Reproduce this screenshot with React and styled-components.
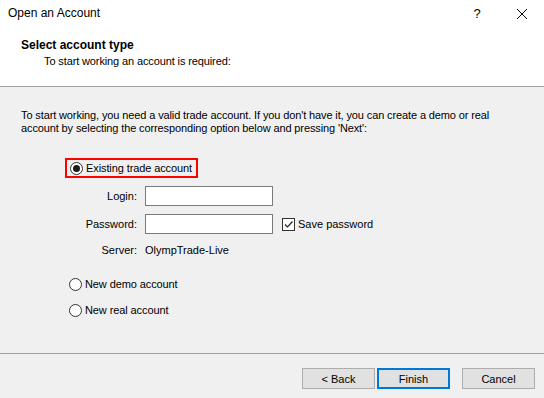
import React from "react";
import styled, { createGlobalStyle } from "styled-components";

const Global = createGlobalStyle`
  html, body { margin: 0; padding: 0; }
  body { background: #f0f0f0; font-family: "Liberation Sans", Arial, sans-serif; font-size: 11px; color: #000; }
  #root { width: 544px; height: 398px; overflow: hidden; }
`;

const Window = styled.div`
  width: 544px; height: 398px; display: flex; flex-direction: column; background: #f0f0f0;
`;
const Top = styled.div`
  background: #fff; height: 86px; border-bottom: 1px solid #a0a0a0; display: flex; flex-direction: column;
`;
const TitleBar = styled.div`
  height: 27px; display: flex; align-items: center; padding-left: 8px; font-size: 12px;
`;
const TitleText = styled.div` flex: 1; margin-top: -1px; `;
const TitleButton = styled.div`
  width: ${p => (p.$narrow ? "44px" : "46px")}; height: 27px; display: flex; align-items: center; justify-content: center; font-size: 13px;
`;
const Heading = styled.div`
  font-weight: bold; font-size: 12px; padding-left: 21px; margin-top: 11px;
`;
const SubHeading = styled.div` padding-left: 44px; margin-top: 3px; font-size: 11px; letter-spacing: -0.12px; `;

const Content = styled.div`
  flex: 1; padding: 22px 0 0 21px; display: flex; flex-direction: column;
`;
const Intro = styled.p` margin: 0; line-height: 13px; width: 500px; letter-spacing: -0.12px; `;
const Options = styled.div` display: flex; flex-direction: column; margin: 23px 0 0 44px; `;
const Highlight = styled.div`
  align-self: flex-start; border: 2px solid #f00; padding: 0 4px 0 3px; height: 16px; display: flex; align-items: center;
`;
const RadioRow = styled.label`
  display: flex; align-items: center; gap: 3px; height: 16px; font-size: 11px; letter-spacing: -0.1px;
`;
const RadioCircle = styled.span`
  width: 11px; height: 11px; border: 1px solid #333; border-radius: 50%; background: #fff;
  display: inline-flex; align-items: center; justify-content: center; box-sizing: content-box;
  &::after { content: ""; width: 7px; height: 7px; border-radius: 50%; background: ${p => (p.$checked ? "#1a1a1a" : "transparent")}; }
`;
const Form = styled.div`
  display: grid; grid-template-columns: 72px 128px auto; column-gap: 8px; row-gap: 8px; margin: 8px 0 0 0; align-items: center;
`;
const Label = styled.div` text-align: right; `;
const Input = styled.div` height: 18px; border: 1px solid #7a7a7a; background: #fff; `;
const Value = styled.div` margin-top: 2px; `;
const ServerLabel = styled(Label)` margin-top: 2px; `;
const CheckRow = styled.div` display: flex; align-items: center; gap: 3px; margin-left: 1px; `;
const CheckBox = styled.span`
  width: 11px; height: 11px; border: 1px solid #333; background: #fff; display: inline-flex; box-sizing: content-box;
`;
const Spacer = styled.div``;
const NewOptions = styled.div` display: flex; flex-direction: column; gap: 10px; margin: 20px 0 0 4px; `;

const Footer = styled.div`
  box-sizing: border-box; height: 45px; border-top: 1px solid #a0a0a0; display: flex; justify-content: flex-end; align-items: flex-start; padding: 14px 9px 0 0; gap: 2px;
`;
const Button = styled.button`
  box-sizing: border-box; width: 73px; height: 21px; font-family: "Liberation Sans", Arial, sans-serif; font-size: 11px; color: #000;
  background: #e1e1e1; border: ${p => (p.$default ? "2px solid #0078d7" : "1px solid #adadad")}; padding: 0;
  margin-right: ${p => (p.$gap ? "10px" : "0")};
`;

export default function App() {
  return (
    <Window>
      <Global />
      <Top>
        <TitleBar>
          <TitleText>Open an Account</TitleText>
          <TitleButton>?</TitleButton>
          <TitleButton $narrow>
            <svg width="10" height="10" viewBox="0 0 10 10"><path d="M0 0L10 10M10 0L0 10" stroke="#000" strokeWidth="1" /></svg>
          </TitleButton>
        </TitleBar>
        <Heading>Select account type</Heading>
        <SubHeading>To start working an account is required:</SubHeading>
      </Top>
      <Content>
        <Intro>
          To start working, you need a valid trade account. If you don't have it, you can create a demo or real account by selecting the corresponding option below and pressing 'Next':
        </Intro>
        <Options>
          <Highlight>
            <RadioRow><RadioCircle $checked />Existing trade account</RadioRow>
          </Highlight>
          <Form>
            <Label>Login:</Label><Input /><Spacer />
            <Label>Password:</Label><Input />
            <CheckRow>
              <CheckBox>
                <svg width="11" height="11" viewBox="0 0 11 11"><path d="M2 5.5L4.5 8L9.5 2.5" fill="none" stroke="#222" strokeWidth="1.2" /></svg>
              </CheckBox>
              Save password
            </CheckRow>
            <ServerLabel>Server:</ServerLabel><Value>OlympTrade-Live</Value><Spacer />
          </Form>
          <NewOptions>
            <RadioRow><RadioCircle />New demo account</RadioRow>
            <RadioRow><RadioCircle />New real account</RadioRow>
          </NewOptions>
        </Options>
      </Content>
      <Footer>
        <Button>&lt; Back</Button>
        <Button $default $gap>Finish</Button>
        <Button>Cancel</Button>
      </Footer>
    </Window>
  );
}
